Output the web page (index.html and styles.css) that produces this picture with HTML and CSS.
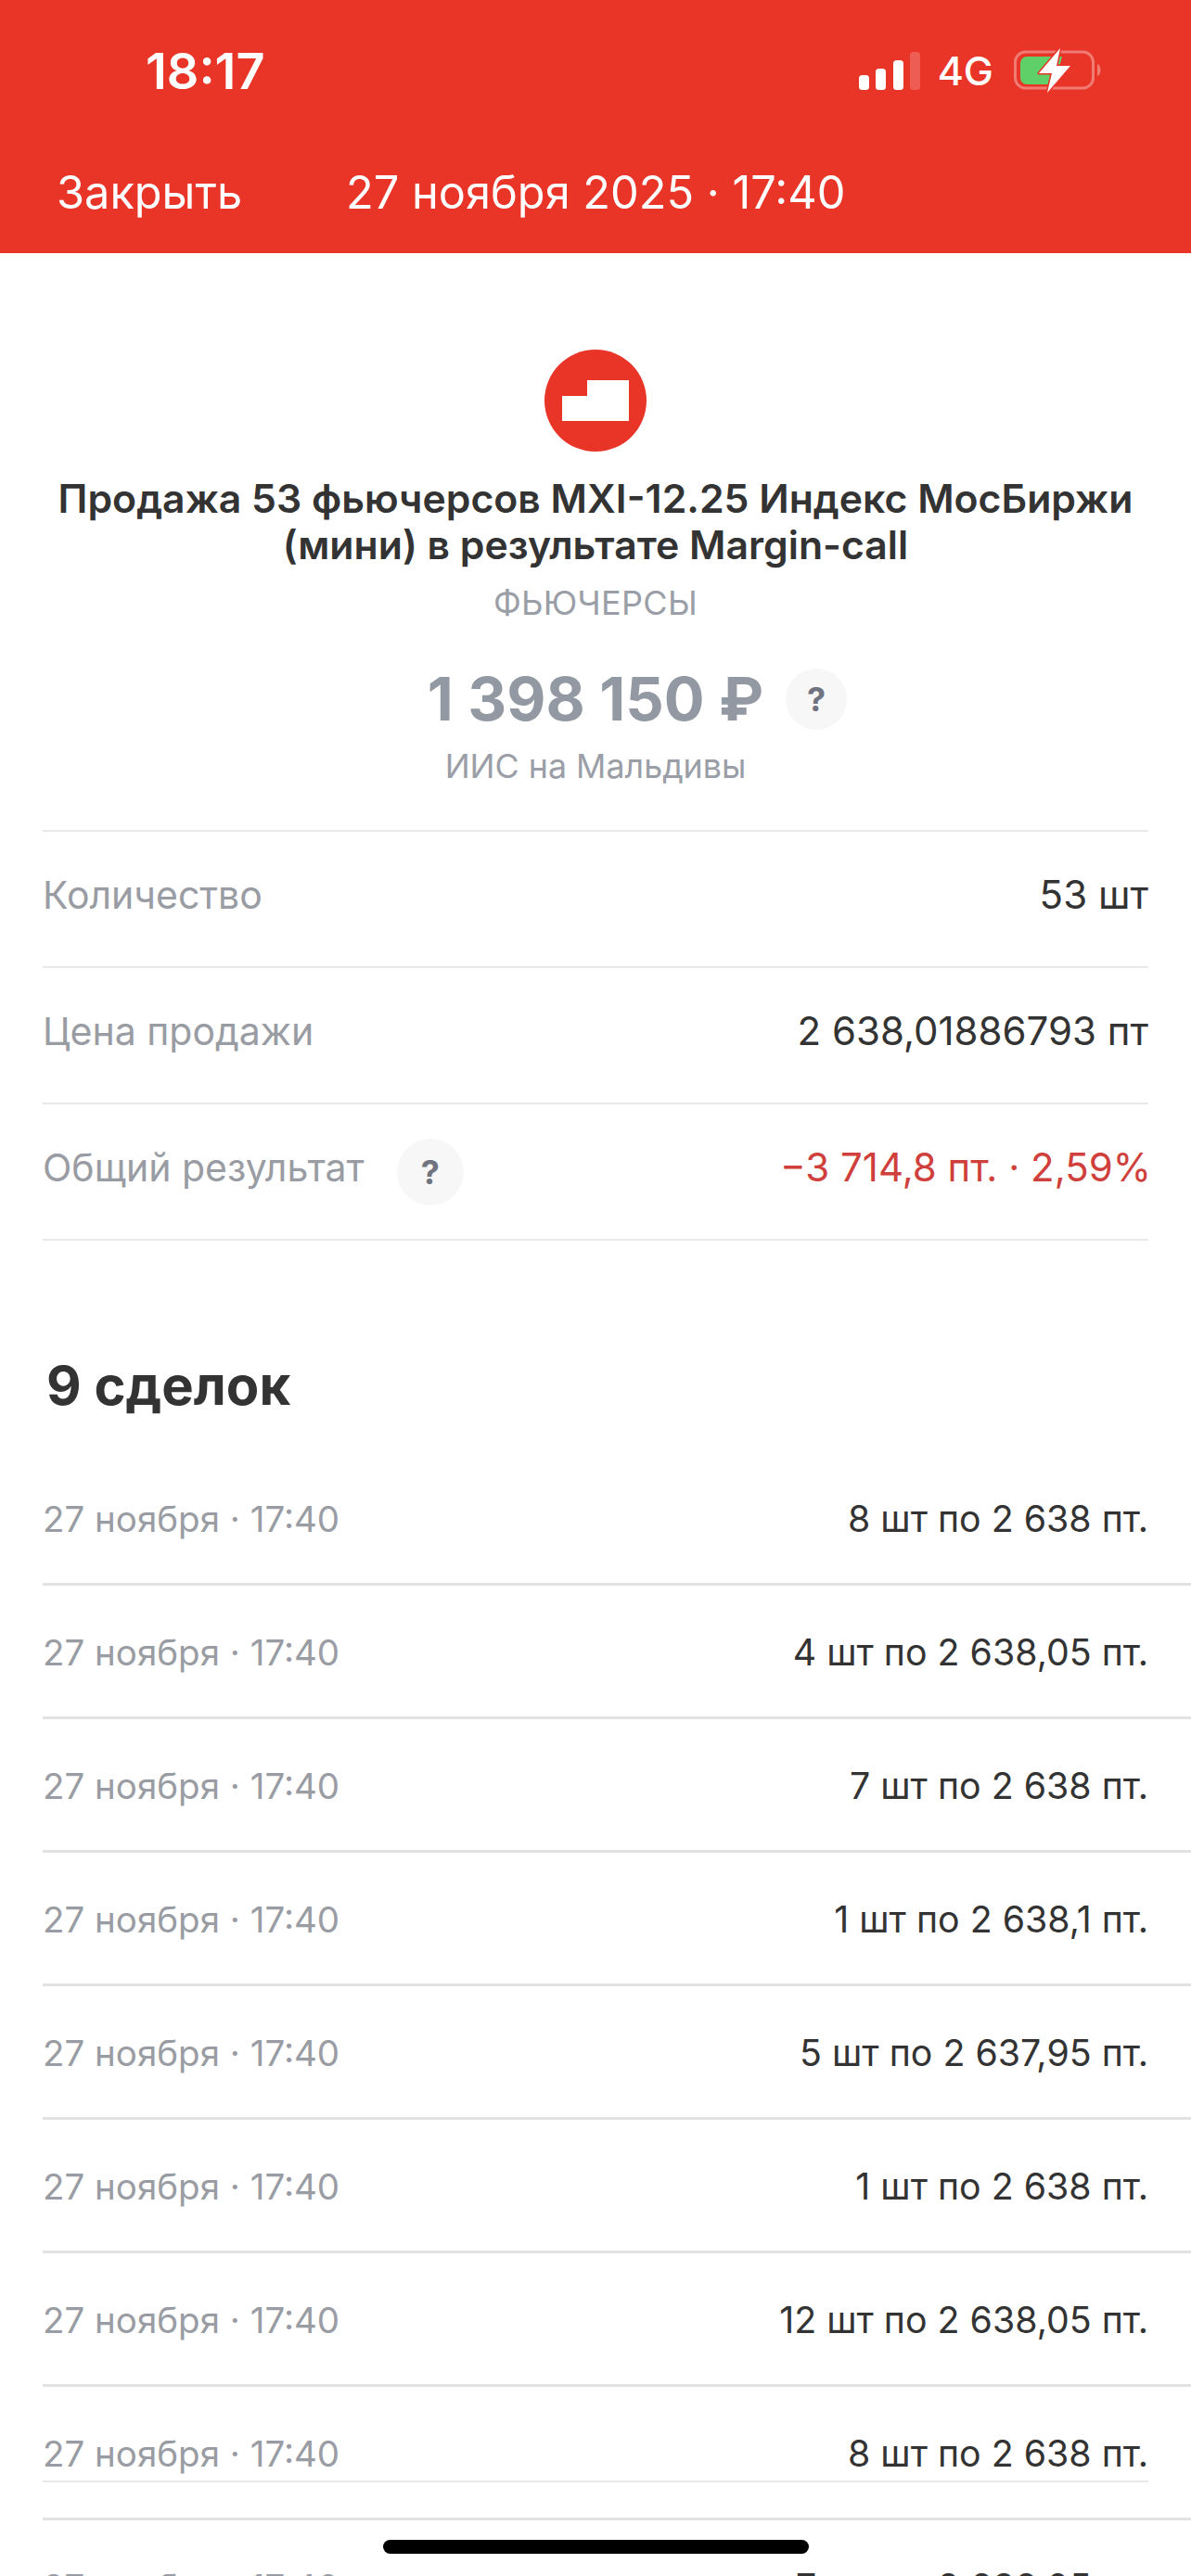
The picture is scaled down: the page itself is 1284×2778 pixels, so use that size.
FILE: index.html
```html
<!DOCTYPE html>
<html lang="ru">
<head>
    <meta charset="UTF-8">
    <meta name="viewport" content="width=device-width, initial-scale=1.0">
    <title>Сделка</title>
    <link rel="stylesheet" href="styles.css">
</head>
<body>
<header class="top">
    <div class="status">
        <span class="time">18:17</span>
        <div class="status-right">
            <svg class="signal" width="66" height="41" viewBox="0 0 66 41">
                <rect x="0" y="25" width="11" height="16" rx="3.5" fill="#fff"/>
                <rect x="18" y="18" width="11" height="23" rx="3.5" fill="#fff"/>
                <rect x="37" y="9" width="11" height="32" rx="3.5" fill="#fff"/>
                <rect x="55" y="0" width="11" height="41" rx="3.5" fill="#fff" fill-opacity="0.2"/>
            </svg>
            <span class="net">4G</span>
            <svg class="battery" width="94" height="48" viewBox="0 0 94 48">
                <rect x="1.500" y="4" width="84" height="39" rx="11" fill="none" stroke="#fff" stroke-opacity="0.35" stroke-width="3"/>
                <path d="M90 17c2.500 1 3.500 4 3.500 6.500s-1 5.500-3.500 6.500z" fill="#fff" fill-opacity="0.35"/>
                <path d="M14 9h38l-8 30H14a7 7 0 0 1-7-7V16a7 7 0 0 1 7-7z" fill="#5fd068"/>
                <path d="M50 0 27 27h14l-5 21 25-29H46z" fill="#fff" stroke="#e93528" stroke-width="3" stroke-linejoin="round" paint-order="stroke"/>
            </svg>
        </div>
    </div>
    <nav class="nav">
        <span class="close">Закрыть</span>
        <span class="nav-date">27 ноября 2025 · 17:40</span>
    </nav>
</header>

<main>
    <section class="summary">
        <svg class="logo" width="110" height="110" viewBox="0 0 110 110">
            <circle cx="55" cy="55" r="55" fill="#e93528"/>
            <path d="M19 50h27V33h45v44H19z" fill="#fff"/>
        </svg>
        <h1 class="title">Продажа 53 фьючерсов MXI-12.25 Индекс МосБиржи<br>(мини) в результате Margin-call</h1>
        <div class="kind">ФЬЮЧЕРСЫ</div>
        <div class="amount-row">
            <span class="amount">1 398 150 ₽</span>
            <span class="hint hint-big">?</span>
        </div>
        <div class="account">ИИС на Мальдивы</div>
    </section>

    <section class="info">
        <div class="info-row">
            <span class="label">Количество</span>
            <span class="value">53 шт</span>
        </div>
        <div class="info-row">
            <span class="label">Цена продажи</span>
            <span class="value">2 638,01886793 пт</span>
        </div>
        <div class="info-row">
            <div class="label-wrap">
                <span class="label">Общий результат</span>
                <span class="hint hint-small">?</span>
            </div>
            <span class="value loss">−3 714,8 пт. · 2,59%</span>
        </div>
    </section>

    <h2 class="deals-title">9 сделок</h2>

    <ul class="deals">
        <li><span class="date">27 ноября · 17:40</span><span class="lot">8 шт по 2 638 пт.</span></li>
        <li><span class="date">27 ноября · 17:40</span><span class="lot">4 шт по 2 638,05 пт.</span></li>
        <li><span class="date">27 ноября · 17:40</span><span class="lot">7 шт по 2 638 пт.</span></li>
        <li><span class="date">27 ноября · 17:40</span><span class="lot">1 шт по 2 638,1 пт.</span></li>
        <li><span class="date">27 ноября · 17:40</span><span class="lot">5 шт по 2 637,95 пт.</span></li>
        <li><span class="date">27 ноября · 17:40</span><span class="lot">1 шт по 2 638 пт.</span></li>
        <li><span class="date">27 ноября · 17:40</span><span class="lot">12 шт по 2 638,05 пт.</span></li>
        <li><span class="date">27 ноября · 17:40</span><span class="lot">8 шт по 2 638 пт.</span></li>
        <li><span class="date">27 ноября · 17:40</span><span class="lot">7 шт по 2 638,05 пт.</span></li>
    </ul>
</main>

<div class="ghost-line"></div>
<div class="home-bar"></div>
</body>
</html>
```

FILE: styles.css
```css
html, body {
    margin: 0;
    padding: 0;
}
body {
    width: 1284px;
    height: 2778px;
    overflow: hidden;
    position: relative;
    background: #fff;
    font-family: Inter, "Liberation Sans", sans-serif;
    color: #333;
}
.top {
    height: 273px;
    background: #e93528;
    color: #fff;
}
.status {
    height: 152px;
    display: flex;
    justify-content: space-between;
    align-items: center;
    padding: 0 97px 0 157px;
}
.time {
    font-size: 54px;
    font-weight: 600;
}
.status-right {
    display: flex;
    align-items: center;
    gap: 22px;
}
.signal {
    margin-right: -3px;
}
.net {
    font-size: 43px;
    font-weight: 500;
}
.nav {
    display: flex;
    align-items: center;
    padding-left: 61px;
    gap: 112px;
    font-size: 48.7px;
    margin-top: 26px;
}
.summary {
    display: flex;
    flex-direction: column;
    align-items: center;
    padding-top: 104px;
}
.logo {
    display: block;
}
.title {
    margin: 26px 0 0;
    font-size: 42.75px;
    line-height: 50px;
    font-weight: 600;
    text-align: center;
    color: #333;
}
.kind {
    margin-top: 14px;
    font-size: 36px;
    line-height: 46px;
    letter-spacing: 0.3px;
    color: #9a9ea6;
}
.amount-row {
    position: relative;
    margin-top: 39px;
}
.amount {
    display: block;
    font-size: 65px;
    line-height: 84px;
    font-weight: 700;
    color: #9299a2;
}
.hint {
    display: flex;
    align-items: center;
    justify-content: center;
    border-radius: 50%;
    background: #f7f7f8;
    color: #6f7480;
    font-size: 36px;
    font-weight: 700;
}
.hint-big {
    position: absolute;
    left: calc(100% + 24px);
    top: 9px;
    width: 66px;
    height: 66px;
}
.hint-small {
    width: 72px;
    height: 72px;
}
.account {
    margin-top: 7px;
    font-size: 35.8px;
    line-height: 46px;
    color: #9a9ea6;
}
.info {
    margin: 46px 46px 0;
    border-top: 2px solid #e9e9ea;
}
.info-row {
    height: 145px;
    display: flex;
    justify-content: space-between;
    align-items: center;
    border-bottom: 2px solid #e9e9ea;
}
.label-wrap {
    display: flex;
    align-items: center;
    gap: 35px;
}
.label {
    font-size: 41px;
    margin-bottom: 10px;
    color: #999ca3;
}
.value {
    font-size: 42px;
    margin-bottom: 10px;
    color: #333;
}
.loss {
    margin-right: -3px;
    color: #cf3f3b;
}
.deals-title {
    margin: 121px 0 0 50px;
    font-size: 58px;
    line-height: 70px;
    font-weight: 700;
    color: #333;
}
.deals {
    list-style: none;
    margin: 37px 0 0 46px;
    padding: 0;
}
.deals li {
    height: 139px;
    display: flex;
    justify-content: space-between;
    align-items: center;
    padding: 2px 46px 0 0;
    border-bottom: 3px solid #e2e2e2;
}
.date {
    font-size: 38.5px;
    color: #999ca3;
}
.lot {
    font-size: 39.3px;
    color: #333;
}
.ghost-line {
    position: absolute;
    left: 46px;
    right: 46px;
    top: 2675px;
    height: 2px;
    background: #e9e9ea;
}
.home-bar {
    position: absolute;
    left: 413px;
    top: 2739px;
    width: 459px;
    height: 15px;
    border-radius: 8px;
    background: #000;
}
```
